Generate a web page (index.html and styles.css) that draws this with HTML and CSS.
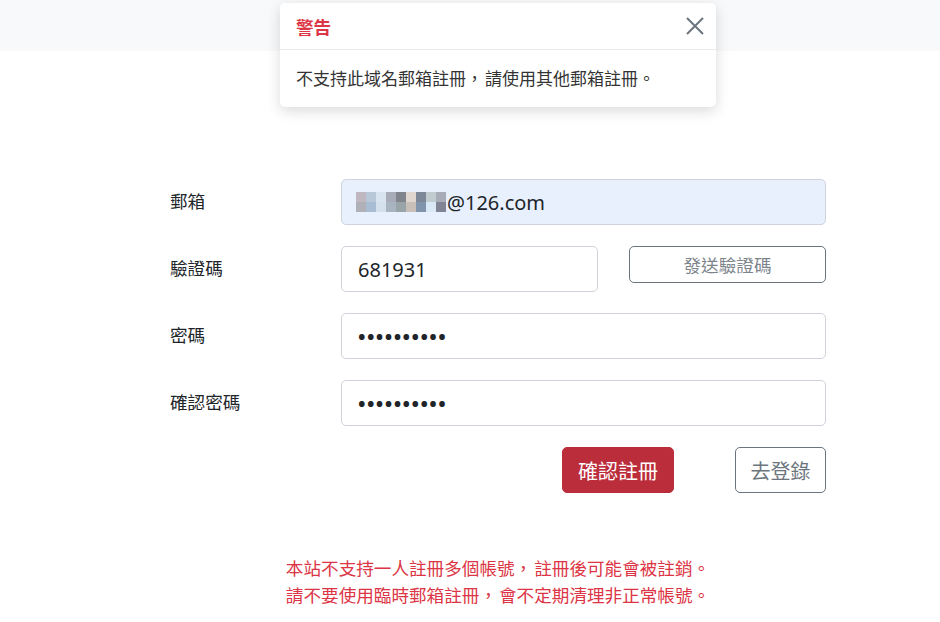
FILE: index.html
```html
<!DOCTYPE html>
<html lang="zh-Hant">
<head>
    <meta charset="UTF-8">
    <meta name="viewport" content="width=device-width, initial-scale=1.0">
    <title>註冊</title>
    <link rel="stylesheet" href="styles.css">
</head>
<body>
    <div class="topbar"></div>

    <!-- warning toast -->
    <div class="toast">
        <div class="toast-header">
            <strong class="toast-title">警告</strong>
            <button class="toast-close" aria-label="close">
                <svg width="20" height="20" viewBox="0 0 20 20">
                    <path d="M2 2 L18 18 M18 2 L2 18" stroke="#6c757d" stroke-width="2" fill="none"/>
                </svg>
            </button>
        </div>
        <div class="toast-body">不支持此域名郵箱註冊<span class="comma">，</span>請使用其他郵箱註冊。</div>
    </div>

    <div class="register">
        <div class="form-row">
            <label class="form-label">郵箱</label>
            <div class="form-control autofill">
                <span class="mosaic">
                    <span style="background:#c0b8c0"></span><span style="background:#b8c8d8"></span><span style="background:#d8e4f0"></span><span style="background:#a8acb8"></span><span style="background:#80848c"></span><span style="background:#e0d8d0"></span><span style="background:#7c8898"></span><span style="background:#c0ccd0"></span><span style="background:#a8acb8"></span>
                    <span style="background:#b0b0b8"></span><span style="background:#a8bcd4"></span><span style="background:#d4e0ec"></span><span style="background:#a8b4c0"></span><span style="background:#98a4a8"></span><span style="background:#c8c0b8"></span><span style="background:#8094ac"></span><span style="background:#d8e8f4"></span><span style="background:#808494"></span>
                </span>@126.com
            </div>
        </div>

        <div class="form-row">
            <label class="form-label">驗證碼</label>
            <div class="code-group">
                <input class="form-control code-input" type="text" value="681931">
                <button class="btn btn-outline btn-send">發送驗證碼</button>
            </div>
        </div>

        <div class="form-row">
            <label class="form-label">密碼</label>
            <input class="form-control password" type="password" value="1234567890">
        </div>

        <div class="form-row">
            <label class="form-label">確認密碼</label>
            <input class="form-control password" type="password" value="1234567890">
        </div>

        <div class="actions">
            <button class="btn btn-danger">確認註冊</button>
            <button class="btn btn-outline btn-login">去登錄</button>
        </div>

        <div class="notes">
            本站不支持一人註冊多個帳號<span class="comma">，</span>註冊後可能會被註銷。<br>
            請不要使用臨時郵箱註冊<span class="comma">，</span>會不定期清理非正常帳號。
        </div>
    </div>
</body>
</html>
```

FILE: styles.css
```css
body {
    margin: 0;
    font-family: "Noto Sans", "Noto Sans CJK SC", sans-serif;
    font-size: 17.6px;
    color: #212529;
    background: #fff;
}
.topbar {
    height: 51px;
    background: #f8f9fa;
}
.toast {
    position: absolute;
    left: 280px;
    top: 3px;
    width: 436px;
    background: #fff;
    border-radius: 5px;
    box-shadow: 0 4px 14px rgba(0, 0, 0, 0.15);
}
.toast-header {
    display: flex;
    align-items: center;
    justify-content: space-between;
    height: 46px;
    padding: 0 10px 0 16px;
    border-bottom: 1px solid #e9ecef;
}
.toast-title {
    color: #dc3545;
    font-weight: bold;
    font-size: 17.6px;
}
.toast-close {
    border: none;
    background: none;
    padding: 0;
    width: 22px;
    height: 22px;
    display: flex;
    align-items: center;
    justify-content: center;
}
.toast-body {
    padding: 17px 16px 18px;
    line-height: 22px;
    color: #333;
    font-family: "Noto Sans CJK SC", sans-serif;
    font-size: 17px;
    white-space: nowrap;
}
.comma {
    margin-right: 2px;
}
.register {
    width: 656px;
    margin: 128px 0 0 170px;
}
.form-row {
    display: grid;
    grid-template-columns: 171px 1fr;
    align-items: center;
    margin-bottom: 21px;
}
.form-label {
    font-size: 17.6px;
    margin-top: -3px;
}
.form-control {
    box-sizing: border-box;
    height: 46px;
    width: 100%;
    padding: 0 16px;
    font-family: "Noto Sans", "Noto Sans CJK SC", sans-serif;
    font-size: 20px;
    color: #212529;
    border: 1px solid #ced4da;
    border-radius: 5px;
    background: #fff;
}
.password {
    letter-spacing: 1.4px;
    font-weight: bold;
}
.autofill {
    display: flex;
    align-items: center;
    background: #e8f0fe;
    border-color: #ced4da;
    padding-left: 14px;
}
.mosaic {
    display: grid;
    grid-template-columns: repeat(9, 10px);
    grid-template-rows: 10px 10px;
    margin-right: 1px;
}
.mosaic span {
    display: block;
}
.code-group {
    display: flex;
    align-items: flex-start;
    gap: 31px;
}
.code-input {
    width: 257px;
    flex: none;
}
.btn {
    font-family: "Noto Sans", "Noto Sans CJK SC", sans-serif;
    border-radius: 5px;
    cursor: pointer;
    box-sizing: border-box;
}
.btn-outline {
    background: #fff;
    color: #6c757d;
    border: 1px solid #6c757d;
}
.btn-send {
    flex: 1;
    height: 37px;
    font-size: 17.6px;
    color: #7d858c;
}
.actions {
    display: flex;
    justify-content: flex-end;
    gap: 61px;
}
.btn-danger {
    height: 46px;
    width: 112px;
    background: #bb2d3b;
    border: 1px solid #bb2d3b;
    color: #fff;
    font-size: 20px;
}
.btn-login {
    height: 46px;
    width: 91px;
    font-size: 20px;
}
.notes {
    margin-top: 61px;
    text-align: center;
    color: #dc3545;
    font-family: "Noto Sans CJK SC", sans-serif;
    font-size: 17.6px;
    line-height: 27px;
}
```
